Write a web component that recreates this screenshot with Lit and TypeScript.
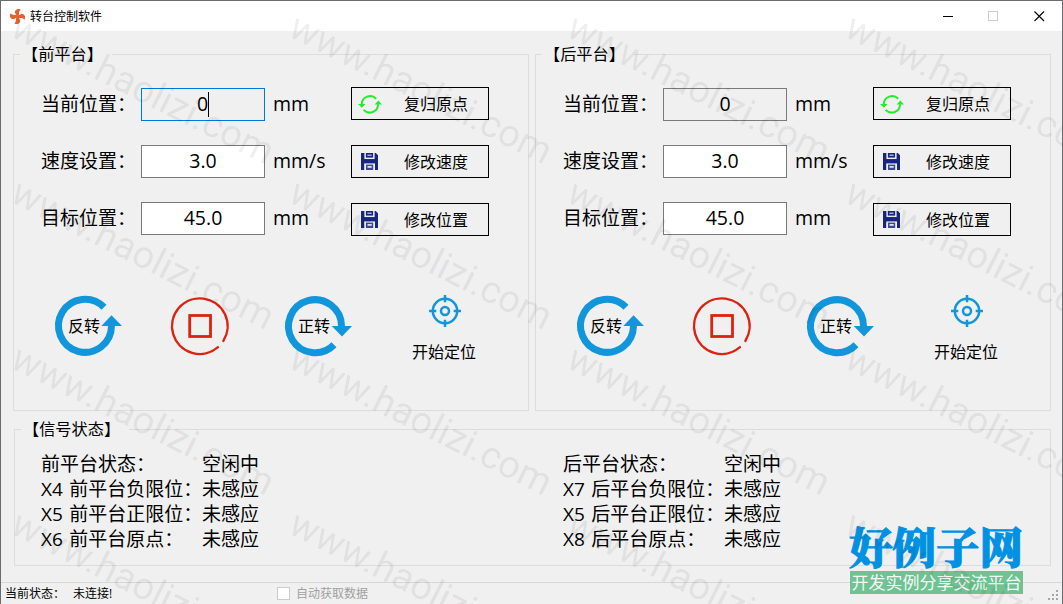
import { LitElement, html, svg, css } from "lit";
import { customElement, property } from "lit/decorators.js";

const refreshIcon = html`<svg width="24" height="22" viewBox="0 0 24 22" overflow="visible" fill="none" stroke="#1fee2a" stroke-width="2">
  <g transform="translate(1 0)"><path d="M3.7 11.3A8.4 8.4 0 0 1 18.2 5.7M20.1 11.3A8.4 8.4 0 0 1 5.6 16.9"/>
  <path d="M0 11h7.6l-3.8 3.8zM16.6 11.4L20.4 7.6L24 11.4z" fill="#1fee2a" stroke="none"/></g></svg>`;

const saveIcon = html`<svg width="17" height="17" viewBox="0 0 17 17">
  <path d="M0 0h3.4v6.2h10.2V0h1.2l2.2 2.2V17h-3V10.2H3.2V17H0z" fill="#17257f"/>
  <rect x="4.9" y="0" width="7.2" height="4.6" fill="#17257f"/>
  <rect x="6.4" y="1.6" width="4.2" height="1.2" fill="#c9cde4"/>
  <rect x="3" y="6.2" width="11" height="4" fill="#17257f"/>
  <rect x="5" y="11.6" width="7.2" height="5.4" fill="#3b4795"/>
  <rect x="6.5" y="13" width="4.2" height="1.8" fill="#dfe1ee"/></svg>`;

@customElement("group-box")
export class GroupBox extends LitElement {
  @property() caption = "";
  static styles = css`
    :host { display: block; box-sizing: border-box; border: 1px solid #dcdcdc; }
    .caption { display: block; width: max-content; height: 24px; line-height: 24px; margin: -13px 0 1px 6px; padding: 0 9px 0 2px; background: #f0f0f0; font-size: 16.2px; white-space: nowrap; }
  `;
  render() { return html`<span class="caption">${this.caption}</span><slot></slot>`; }
}

@customElement("platform-panel")
export class PlatformPanel extends LitElement {
  @property() caption = "";
  @property({ type: Boolean }) focused = false;
  static styles = css`
    :host { display: block; width: 516px; }
    group-box { height: 357px; }
    .controls { display: flex; padding: 20px 0 0 27px; }
    .fields { display: flex; flex-direction: column; gap: 24px; width: 310px; padding-top: 1px; }
    .field { display: flex; height: 33px; align-items: center; font-size: 19px; line-height: 33px; }
    .label { width: 100px; white-space: nowrap; }
    .input { width: 124px; height: 33px; box-sizing: border-box; border: 1px solid #7a7a7a; background: #fff; display: flex; justify-content: center; line-height: 29px; margin-right: 8px; }
    .value, .unit { font-size: 19.5px; }
    .unit { line-height: 31px; padding-bottom: 2px; }
    .input.readonly { background: #f0f0f0; }
    .input.focus { border-color: #0078d7; }
    .caret { width: 1px; height: 25px; margin: 3px 0 0; background: #000; }
    .actions { display: flex; flex-direction: column; gap: 25px; }
    .action { width: 138px; height: 33px; box-sizing: border-box; border: 1px solid #000; display: flex; align-items: center; font-size: 16px; line-height: 31px; }
    .glyph { display: flex; width: 34px; justify-content: center; }
    .action-text { padding: 2px 0 0 18px; line-height: 29px; white-space: nowrap; }
    .motions { display: flex; padding: 54px 0 0 37px; }
    .motion { width: 115px; height: 76px; }
    .locate { display: flex; flex-direction: column; align-items: center; width: 70px; margin-left: 13px; padding-top: 4px; font-size: 16px; white-space: nowrap; }
    .locate-icon { padding-left: 2px; }
    .locate-text { line-height: 24px; margin-top: 12px; }
    svg { display: block; }
    text { font-size: 16px; }
  `;
  field(label: string, value: string, unit: string, cls = "") {
    return html`<div class="field"><span class="label">${label}</span><div class="input ${cls}"><span class="value">${value}</span>${cls.includes("focus") ? html`<i class="caret"></i>` : ""}</div><span class="unit">${unit}</span></div>`;
  }
  action(icon: unknown, text: string) {
    return html`<div class="action"><span class="glyph">${icon}</span><span class="action-text">${text}</span></div>`;
  }
  render() {
    return html`<group-box caption=${this.caption}>
      <div class="controls">
        <div class="fields">
          ${this.field("当前位置：", "0", "mm", this.focused ? "readonly focus" : "readonly")}
          ${this.field("速度设置：", "3.0", "mm/s")}
          ${this.field("目标位置：", "45.0", "mm")}
        </div>
        <div class="actions">
          ${this.action(refreshIcon, "复归原点")}
          ${this.action(saveIcon, "修改速度")}
          ${this.action(saveIcon, "修改位置")}
        </div>
      </div>
      <div class="motions">
        <div class="motion"><svg width="76" height="70" viewBox="0 0 76 70">
          <path d="M60.5 36A26.5 26.5 0 1 1 53 17.3" fill="none" stroke="#1296db" stroke-width="7"/>
          <path d="M50.3 36L60.5 25.3L71 36z" fill="#1296db"/>
          <text x="17" y="41.5">反转</text></svg></div>
        <div class="motion"><svg width="76" height="70" viewBox="0 0 76 70" fill="none" stroke="#dc2311" stroke-width="2.4" stroke-linecap="round">
          <path d="M52 57.2A27.8 27.8 0 1 1 57.4 50.9"/>
          <rect x="23.7" y="25.5" width="20.8" height="21" stroke-width="2.8"/></svg></div>
        <div class="motion"><svg width="76" height="70" viewBox="0 0 76 70">
          <path d="M60.5 36A26.5 26.5 0 1 0 53 54.7" fill="none" stroke="#1296db" stroke-width="7"/>
          <path d="M50.7 36L61 46.5L71 36z" fill="#1296db"/>
          <text x="17" y="41.5">正转</text></svg></div>
        <div class="locate"><svg class="locate-icon" width="34" height="34" viewBox="0 0 34 34" fill="none" stroke="#1296db" stroke-width="2.5">
          <circle cx="17" cy="17" r="12.2"/><circle cx="17" cy="17" r="4"/>
          <path d="M17 1v7.3M17 25.7V33M1 17h7.3M25.7 17H33"/></svg>
          <span class="locate-text">开始定位</span></div>
      </div>
    </group-box>`;
  }
}

@customElement("app-root")
export class AppRoot extends LitElement {
  static styles = css`
    :host { display: block; position: relative; width: 1063px; height: 604px; overflow: hidden; box-sizing: border-box; border: 1px solid #6b6a6e; border-bottom: 0; background: #f0f0f0; color: #000; font-family: "Open Sans", "Noto Sans CJK SC", sans-serif; font-weight: 400; }
    svg { display: block; }
    .titlebar { display: flex; align-items: center; height: 30px; background: #fff; padding-left: 8px; font-size: 12px; }
    .title { margin-left: 4px; flex: 1; }
    .window-buttons { display: flex; }
    .window-button { width: 46px; display: flex; justify-content: center; }
    .content { display: flex; flex-direction: column; padding: 23px 11px 0 12px; height: 528px; }
    .platforms { display: flex; gap: 6px; margin-bottom: 18px; }
    .signals { height: 137px; margin-left: 1px; }
    .signal-columns { display: flex; padding: 10px 0 0 26px; }
    .signal-list { display: grid; grid-template-columns: 161px 361px; grid-auto-rows: 25px; font-size: 19px; line-height: 25px; white-space: nowrap; word-spacing: 1.6px; }
    .statusbar { display: flex; align-items: center; box-sizing: border-box; height: 22px; border-top: 1px solid #d7d7d7; padding-left: 4px; font-size: 12px; line-height: 21px; white-space: nowrap; }
    .status-name { width: 68px; }
    .status-value { width: 204px; }
    .checkbox { box-sizing: border-box; width: 13px; height: 13px; border: 1px solid #ccc; background: #fff; margin-right: 6px; }
    .auto { color: #a0a0a0; flex: 1; }
    .grip { margin-right: 2px; align-self: flex-end; }
    .brand { position: absolute; left: 848px; top: 522px; width: 174px; font-family: "Noto Serif CJK SC", "Noto Sans CJK SC", sans-serif; }
    .brand-name { height: 48px; line-height: 44px; font-size: 43.5px; font-weight: 900; color: #0091e2; -webkit-text-stroke: 1px #0091e2; white-space: nowrap; }
    .brand-tag { height: 23px; line-height: 22px; font-family: "Noto Sans CJK SC", sans-serif; font-size: 17px; text-align: center; background: #6fc292; color: #f2faf5; white-space: nowrap; margin-left: 1px; }
    .watermark { position: absolute; left: -1px; top: -1px; pointer-events: none; }
    .watermark text { font: 38px Roboto, sans-serif; fill: #000; fill-opacity: 0.08; }
  `;
  signals(rows: string[][]) {
    return html`<div class="signal-list">${rows.map(([k, v]) => html`<span>${k}</span><span>${v}</span>`)}</div>`;
  }
  render() {
    const marks = [0, 1, 2, 3].flatMap(r => [0, 1, 2, 3].map(c => [8.5 + c * 278, 35.5 + r * 165.6]));
    return html`
      <div class="titlebar">
        <svg width="17" height="17" viewBox="-8.5 -8.5 17 17" fill="#e4622f">
          ${[0, 90, 180, 270].map(a => svg`<path d="M-0.4 0.4L-3.6 -3.4C-4 -5.8 -2.6 -7.6 0.2 -7.8L1.4 -7.4C0.4 -6 0.2 -4.4 1 -2.8L1 0z" transform="rotate(${a + 14})"/>`)}
        </svg>
        <span class="title">转台控制软件</span>
        <div class="window-buttons">
          <span class="window-button"><svg width="9" height="11" overflow="visible" stroke="#000"><path d="M0 5.5h10"/></svg></span>
          <span class="window-button"><svg width="11" height="11" fill="none" stroke="#ccc"><rect x=".5" y=".5" width="9" height="9"/></svg></span>
          <span class="window-button"><svg width="11" height="11" stroke="#000" stroke-width="1.1"><path d="M.5 .5l9.5 9.5M10 .5l-9.5 9.5"/></svg></span>
        </div>
      </div>
      <div class="content">
        <div class="platforms">
          <platform-panel caption="【前平台】" focused></platform-panel>
          <platform-panel caption="【后平台】"></platform-panel>
        </div>
        <group-box class="signals" caption="【信号状态】">
          <div class="signal-columns">
            ${this.signals([["前平台状态：", "空闲中"], ["X4 前平台负限位：", "未感应"], ["X5 前平台正限位：", "未感应"], ["X6 前平台原点：", "未感应"]])}
            ${this.signals([["后平台状态：", "空闲中"], ["X7 后平台负限位：", "未感应"], ["X5 后平台正限位：", "未感应"], ["X8 后平台原点：", "未感应"]])}
          </div>
        </group-box>
      </div>
      <div class="statusbar">
        <span class="status-name">当前状态：</span><span class="status-value">未连接!</span>
        <span class="checkbox"></span><span class="auto">自动获取数据</span>
        <svg class="grip" width="12" height="14" fill="#a5a5a5">${[[8, 0], [4, 4], [8, 4], [0, 8], [4, 8], [8, 8]].map(([x, y]) => svg`<rect x=${x} y=${y} width="2" height="2"/>`)}</svg>
      </div>
      <div class="brand"><div class="brand-name">好例子网</div><div class="brand-tag">开发实例分享交流平台</div></div>
      <svg class="watermark" width="1063" height="604">${marks.map(([x, y]) => svg`<text transform="translate(${x} ${y}) rotate(26.7)">www.haolizi.com</text>`)}</svg>
    `;
  }
}
